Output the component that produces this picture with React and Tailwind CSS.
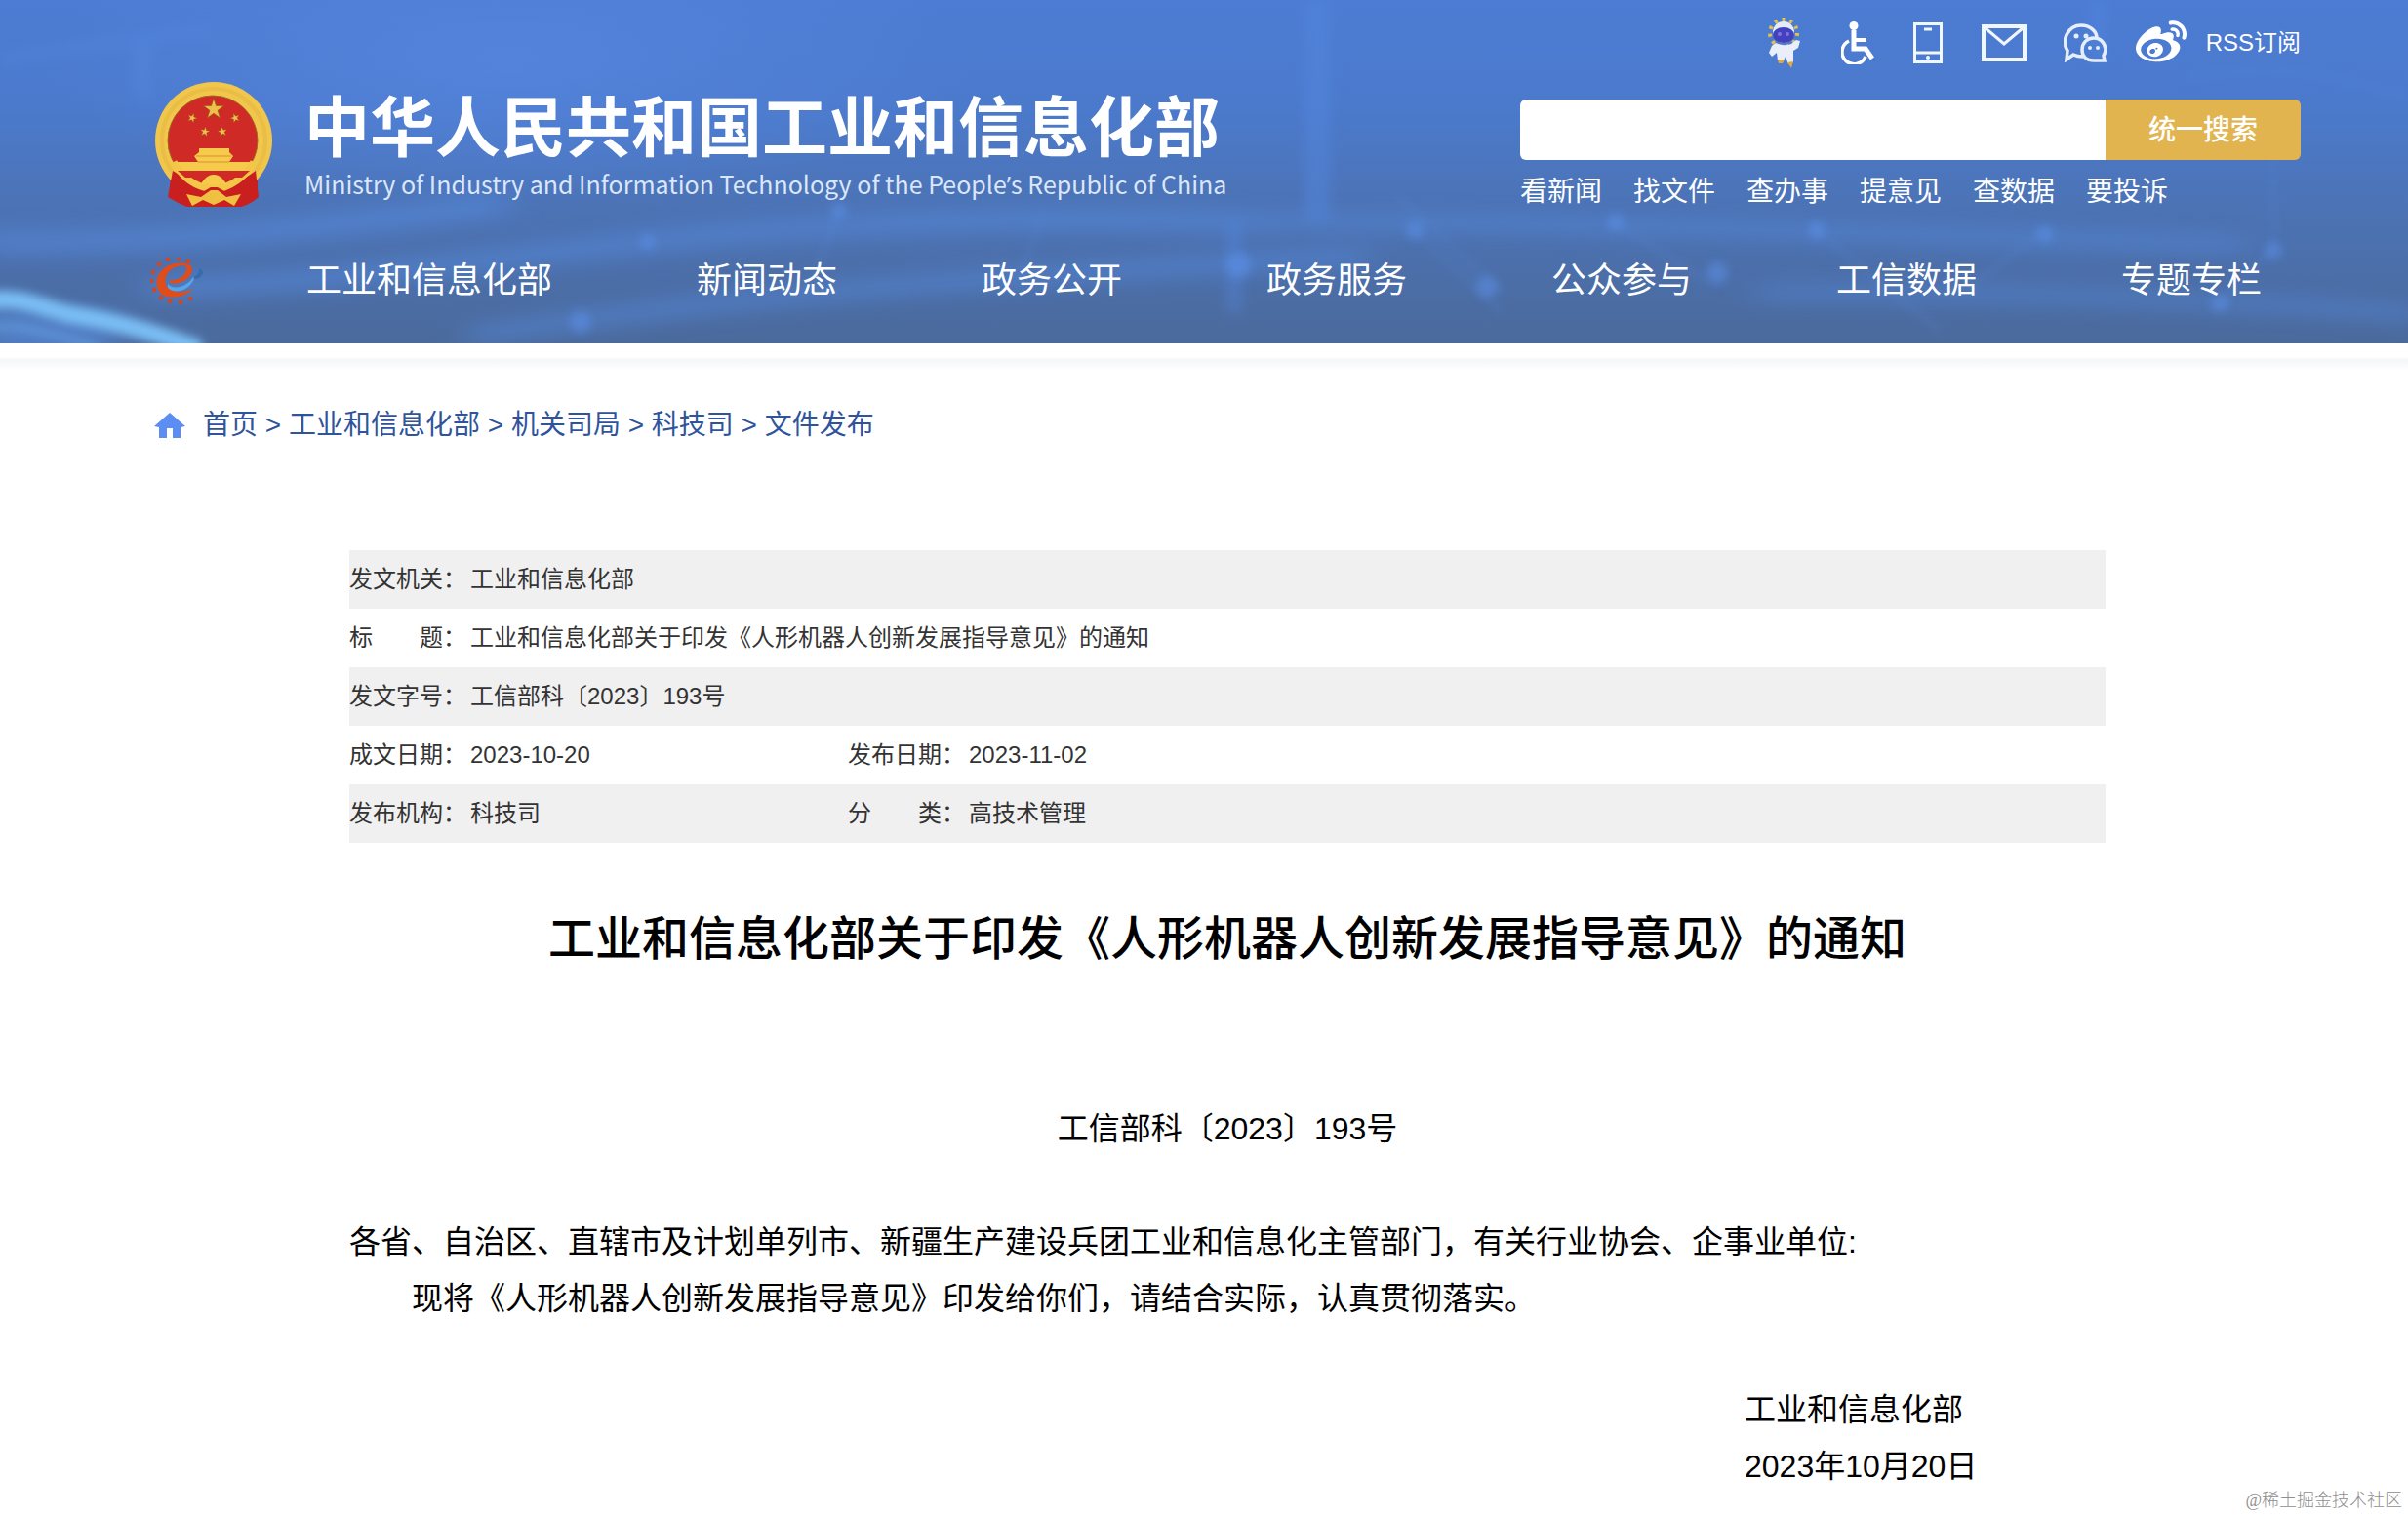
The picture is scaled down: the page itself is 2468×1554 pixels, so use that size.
import React from 'react';
import { FaWeibo } from 'react-icons/fa';

const navItems = ['工业和信息化部', '新闻动态', '政务公开', '政务服务', '公众参与', '工信数据', '专题专栏'];

const quickLinks = ['看新闻', '找文件', '查办事', '提意见', '查数据', '要投诉'];

const crumbs = ['首页', '工业和信息化部', '机关司局', '科技司', '文件发布'];

const docInfo = [
  [['发文机关：', '工业和信息化部']],
  [['标　　题：', '工业和信息化部关于印发《人形机器人创新发展指导意见》的通知']],
  [['发文字号：', '工信部科〔2023〕193号']],
  [['成文日期：', '2023-10-20'], ['发布日期：', '2023-11-02']],
  [['发布机构：', '科技司'], ['分　　类：', '高技术管理']],
];

const STAR = 'M0,-10 L2.3,-3.1 L9.5,-3.1 L3.7,1.2 L5.9,8.1 L0,3.9 L-5.9,8.1 L-3.7,1.2 L-9.5,-3.1 L-2.3,-3.1 Z';

// teeth of the gear logo, as points round its centre
const teeth = [[39, 4], [29, 1], [18, 2], [9, 7], [3, 15], [1, 24], [4, 33], [11, 41], [20, 45], [31, 46], [41, 42]];

function HeaderBackdrop() {
  return (
    <svg className="absolute inset-0 w-full h-full" viewBox="0 0 2468 352" preserveAspectRatio="none" aria-hidden="true">
      <defs>
        <linearGradient id="sky" x1="0" y1="0" x2="0" y2="1">
          <stop offset="0" stopColor="#4c7cd3" />
          <stop offset="0.3" stopColor="#4b7acd" />
          <stop offset="0.6" stopColor="#4c73b5" />
          <stop offset="1" stopColor="#4b6a9c" />
        </linearGradient>
        <radialGradient id="glow">
          <stop offset="0" stopColor="#5585de" stopOpacity="0.8" />
          <stop offset="1" stopColor="#5585de" stopOpacity="0" />
        </radialGradient>
        <filter id="soft" x="-200" y="-100" width="2868" height="552" filterUnits="userSpaceOnUse">
          <feGaussianBlur stdDeviation="7" />
        </filter>
        <filter id="softer" x="-200" y="-100" width="2868" height="552" filterUnits="userSpaceOnUse">
          <feGaussianBlur stdDeviation="18 10" />
        </filter>
        <filter id="fine" x="-200" y="-100" width="2868" height="552" filterUnits="userSpaceOnUse">
          <feGaussianBlur stdDeviation="5" />
        </filter>
      </defs>
      <rect width="2468" height="352" fill="url(#sky)" />
      <ellipse cx="520" cy="60" rx="480" ry="150" fill="url(#glow)" />
      <g filter="url(#softer)" fill="none" stroke="#5488da" opacity="0.65">
        <path d="M-20,248 C120,250 300,240 520,208" strokeWidth="24" />
        <path d="M150,296 C350,290 520,262 700,244 C900,225 1100,222 1290,228" strokeWidth="20" />
        <path d="M480,345 C700,310 900,290 1400,262" strokeWidth="16" />
        <path d="M1200,228 C1600,224 1900,240 2300,250" strokeWidth="14" />
        <path d="M1800,300 C2050,300 2250,305 2480,322" strokeWidth="12" />
        <path d="M-20,335 L120,350" strokeWidth="50" />
      </g>
      <g filter="url(#soft)" stroke="#5488e0" opacity="0.45" fill="none">
        <path d="M146,45 V100" strokeWidth="18" />
        <path d="M1350,0 V225" strokeWidth="26" />
        <path d="M2150,0 V60" strokeWidth="14" />
        <path d="M1265,230 V320" strokeWidth="14" />
        <path d="M0,60 L220,30" strokeWidth="10" />
      </g>
      <g filter="url(#fine)" fill="none" stroke="#5a8bdb" opacity="0.25" strokeWidth="5">
        <path d="M1450,236 L1540,320 M1860,236 L1990,340 M2090,240 L2010,300 M2330,160 V255 L2275,310 M1430,200 L1540,300 M1660,230 L1750,290 M860,212 L830,300" />
        <path d="M2240,80 C2340,60 2400,80 2468,100 M1070,215 L1040,300" />
      </g>
      <g filter="url(#fine)" fill="#5b90e8" opacity="0.55">
        <circle cx="1450" cy="236" r="9" />
        <circle cx="1656" cy="228" r="9" />
        <circle cx="1862" cy="236" r="9" />
        <circle cx="2096" cy="240" r="9" />
        <circle cx="2330" cy="257" r="9" />
        <circle cx="2275" cy="311" r="9" />
        <circle cx="1524" cy="294" r="11" />
        <circle cx="1760" cy="280" r="11" />
        <circle cx="1270" cy="272" r="13" />
        <circle cx="860" cy="216" r="8" />
        <circle cx="664" cy="248" r="8" />
        <circle cx="595" cy="330" r="11" />
      </g>
      <g filter="url(#fine)" fill="none" stroke="#79bdf4">
        <path d="M-10,308 C20,304 40,314 70,322 C120,330 150,338 205,358" strokeWidth="18" />
        <path d="M-10,335 C30,332 60,345 100,356" strokeWidth="6" opacity="0.4" />
      </g>
    </svg>
  );
}

function Emblem() {
  return (
    <svg className="w-[122px] h-32 shrink-0" viewBox="0 0 122 128" role="img" aria-label="国徽">
      <path d="M18,86 L106,86 L106,118 Q98,126 88,128 L34,128 Q24,124 15,118 Z" fill="#c41f22" />
      <circle cx="61" cy="60" r="60" fill="#f1c64c" />
      <circle cx="61" cy="60" r="53" fill="none" stroke="#e2b03d" strokeWidth="4" opacity="0.4" />
      <circle cx="60" cy="60" r="46" fill="#d02a26" stroke="#9c6a22" strokeWidth="1" />
      <g fill="#eec04a" stroke="#8a5a1c" strokeWidth="0.6">
        <path d={STAR} transform="translate(61 28) scale(1.1)" />
        <path d={STAR} transform="translate(39 37) scale(0.5) rotate(20)" />
        <path d={STAR} transform="translate(83 37) scale(0.5) rotate(-20)" />
        <path d={STAR} transform="translate(52 51) scale(0.5) rotate(10)" />
        <path d={STAR} transform="translate(70 51) scale(0.5) rotate(-10)" />
      </g>
      <path d="M46,68 H77 V72 L81,76 L77,82 H98 V91 H24 V82 H45 L41,76 L46,72 Z" fill="#f6cb4c" />
      <path d="M43,76 H79 M45,82 H77" stroke="#d9902f" strokeWidth="1" />
      <path d="M19,91 Q34,100 48,108 L75,108 Q92,100 104,91 L107,118 Q98,126 88,128 L34,128 Q24,124 14,118 Z" fill="#c9201f" />
      <path d="M20,82 Q32,103 51,108 L61,102 L72,108 Q92,100 102,82" fill="none" stroke="#f3c648" strokeWidth="7" />
      <path d="M24,91 H98 L90,98 H76 Q68,93 61,94 Q54,93 46,98 H32 Z" fill="#d02a26" />
      <path d="M47,106 Q54,94 61,95 Q68,94 75,106 L66,104 L61,107 L55,104 Z" fill="#f6cb4c" />
      <path d="M33,115 L48,118 L58,111 L65,111 L74,118 L89,115 L82,127 L72,121 L61,126 L50,121 L39,127 Z" fill="#f0c043" />
    </svg>
  );
}

function GearLogo() {
  return (
    <svg className="w-14 h-12" viewBox="0 0 56 48" aria-hidden="true">
      <path d="M18,27 C24,34 38,30 44,20 L45,22 C40,33 27,38 18,32 Z" fill="#57a4e6" />
      <path d="M45,20 Q51,17 50,11 Q56,14 53,18 Q50,22 45,22 Z" fill="#346cb0" />
      {teeth.map(([x, y]) => (
        <circle key={`${x}-${y}`} cx={x} cy={y} r="2.3" fill="#d8441c" />
      ))}
      <path
        d="M20,26 C30,29 43,21 43,12 C43,4 24,3 14,11 C4,19 4,33 14,39 C23,43 37,40 44,32 C36,36 24,37 18,31 C12,24 17,12 28,9 C35,7 38,9 37,13 C35,20 27,24 20,23 Z"
        fill="#e04c1a"
      />
    </svg>
  );
}

function Mascot() {
  return (
    <svg className="w-9 h-[52px]" viewBox="0 0 36 52" aria-hidden="true">
      <circle cx="17" cy="16" r="14" fill="none" stroke="#e2c14c" strokeWidth="4" strokeDasharray="3 5" />
      <ellipse cx="17" cy="15" rx="11" ry="11" fill="#e6ebf8" />
      <ellipse cx="17" cy="18" rx="11" ry="8" fill="#4341bd" />
      <circle cx="13" cy="17" r="2" fill="#7d74e0" />
      <circle cx="21" cy="17" r="2" fill="#7d74e0" />
      <path d="M9,26 Q17,30 25,27 L30,23 L34,24 L32,31 L27,34 L27,46 L22,48 L19,40 L17,44 L11,44 L10,36 L5,40 L2,36 L5,29 Z" fill="#e9eefa" />
      <path d="M11,43 H18 L16,47 H12 Z M21,46 L27,45 L25,52 Z" fill="#dfa940" />
    </svg>
  );
}

function ToolIcons() {
  return (
    <>
      <a href="#robot" aria-label="智能问答"><Mascot /></a>
      <a href="#barrier-free" aria-label="无障碍" className="ml-10">
        <svg className="w-[34px] h-11" viewBox="0 0 34 44" fill="none" stroke="#fff">
          <circle cx="13" cy="4.5" r="4.5" fill="#fff" stroke="none" />
          <path d="M13,9 V28 H25 L32,38" strokeWidth="5" />
          <path d="M13,19 H26" strokeWidth="4" />
          <path d="M8,20 A12.500,12.500 0 1 0 25,36" strokeWidth="3.5" />
        </svg>
      </a>
      <a href="#mobile" aria-label="手机版" className="ml-10">
        <svg className="w-[30px] h-[42px]" viewBox="0 0 30 42" fill="none" stroke="#f2f6fd" strokeWidth="3">
          <path d="M1.5,1.5 H28.5 V40.5 H1.5 Z M1.5,31 H28.5" />
          <path d="M11,7 H19" strokeWidth="3" />
          <circle cx="15" cy="36" r="2" fill="#f2f6fd" stroke="none" />
        </svg>
      </a>
      <a href="#mail" aria-label="邮箱" className="ml-10">
        <svg className="w-[46px] h-[38px]" viewBox="0 0 46 38" fill="none" stroke="#f2f6fd" strokeWidth="4">
          <path d="M2,2 H44 V36 H2 Z" />
          <path d="M4,4 L23,20 L42,4" strokeWidth="3" />
        </svg>
      </a>
      <a href="#wechat" aria-label="微信" className="ml-[38px]">
        <svg className="w-11 h-10" viewBox="0 0 44 40" fill="none" stroke="#e6eefb" strokeWidth="3.5">
          <path d="M20,34 Q14,34 10,32 L3,37 L4,28 C-3,17 5,2 18,2 C27,2 34,8 34,15" />
          <path d="M42,38 L41,33 Q43,30 43,26 C42,19 37,15 31,15 C24,15 19,20 19,27 C19,34 24,38 31,38 Z" />
          <g fill="#e6eefb" stroke="none">
            <circle cx="13" cy="13" r="2.5" />
            <circle cx="23" cy="13" r="2.5" />
            <circle cx="27" cy="25" r="2" />
            <circle cx="35" cy="25" r="2" />
          </g>
        </svg>
      </a>
      <a href="#weibo" aria-label="微博" className="ml-[30px]"><FaWeibo size={52} /></a>
    </>
  );
}

function Header() {
  return (
    <header className="relative bg-[#4b74ba] text-white pl-12">
      <HeaderBackdrop />
      <div className="relative max-w-[2200px] mx-auto">
        <div className="flex justify-between">
          <a href="#home" className="flex items-start pt-[84px]">
            <Emblem />
            <span className="block ml-8 whitespace-nowrap">
              <span className="block pt-1 text-[67px] leading-[88px] font-bold">中华人民共和国工业和信息化部</span>
              <span className="block text-[25px] leading-6 text-[#dbe6f8] font-['Noto_Sans_CJK_SC',sans-serif]">
                Ministry of Industry and Information Technology of the People
                <span className="font-['Open_Sans',sans-serif]">’</span>
                s Republic of China
              </span>
            </span>
          </a>

          <div className="w-[800px] pt-[18px]">
            <div className="flex items-center justify-end h-[52px]">
              <ToolIcons />
              <a href="#rss" className="ml-5 text-2xl whitespace-nowrap">RSS订阅</a>
            </div>
            <form className="flex mt-8 h-[62px] rounded-md overflow-hidden" onSubmit={(e) => e.preventDefault()}>
              <input type="text" aria-label="搜索" className="flex-1 min-w-0 bg-white px-4 text-[28px] text-gray-800 outline-none" />
              <button type="submit" className="w-[200px] pt-0.5 bg-[#e2b44f] text-[28px] font-medium">统一搜索</button>
            </form>
            <div className="flex gap-8 mt-3 text-[28px] leading-[42px]">
              {quickLinks.map((link) => (
                <a key={link} href="#search">{link}</a>
              ))}
            </div>
          </div>
        </div>

        <nav className="flex items-center h-[134px] pt-1.5 whitespace-nowrap">
          <a href="#home" aria-label="首页" className="-ml-1 mr-[104px]"><GearLogo /></a>
          <div className="flex gap-[148px] text-4xl">
            {navItems.map((item) => (
              <a key={item} href="#nav">{item}</a>
            ))}
          </div>
        </nav>
      </div>
    </header>
  );
}

function Breadcrumb() {
  return (
    <div className="flex items-center pt-9 text-[28px] leading-10 text-[#2f549b]">
      <svg className="w-8 h-[26px] mr-[18px]" viewBox="0 0 32 26" fill="#5b8df2" aria-hidden="true">
        <path d="M16,0 L32,14 L27,15 V26 H19 V16 H13 V26 H5 V15 L0,14 Z" />
      </svg>
      <p>
        {crumbs.map((crumb, index) => (
          <React.Fragment key={crumb}>
            {index > 0 && ' > '}
            <a href="#crumb">{crumb}</a>
          </React.Fragment>
        ))}
      </p>
    </div>
  );
}

function DocTable() {
  return (
    <table className="w-full mt-[108px] table-fixed text-2xl text-[#333]">
      <colgroup>
        <col className="w-[124px]" />
        <col className="w-[387px]" />
        <col className="w-[124px]" />
        <col />
      </colgroup>
      <tbody>
        {docInfo.map((row) => (
          <tr key={row[0][0]} className="h-[60px] odd:bg-[#f0f0f0]">
            {row.map(([label, value]) => (
              <React.Fragment key={label}>
                <th scope="row" className="text-left font-normal whitespace-nowrap">{label}</th>
                <td colSpan={row.length === 1 ? 3 : 1}>{value}</td>
              </React.Fragment>
            ))}
          </tr>
        ))}
      </tbody>
    </table>
  );
}

function App() {
  return (
    <div lang="zh-CN" className="relative bg-white text-black font-['Liberation_Sans','Noto_Sans_CJK_SC',sans-serif]">
      <Header />
      <div className="h-7 bg-linear-to-b from-white from-50% via-[#f4f6f7] via-60% to-white" />

      <main className="pl-12">
        <div className="max-w-[2200px] mx-auto">
          <Breadcrumb />
          <article className="max-w-[1800px] mx-auto pb-6">
            <DocTable />
            <h1 className="mt-16 text-5xl leading-[70px] font-medium text-center">
              工业和信息化部关于印发《人形机器人创新发展指导意见》的通知
            </h1>
            <div className="mt-[130px] text-[32px] leading-[58px]">
              <p className="text-center">工信部科〔2023〕193号</p>
              <p className="mt-[58px]">
                各省、自治区、直辖市及计划单列市、新疆生产建设兵团工业和信息化主管部门，有关行业协会、企事业单位:
              </p>
              <p className="indent-16">现将《人形机器人创新发展指导意见》印发给你们，请结合实际，认真贯彻落实。</p>
              <div className="w-[370px] ml-auto mt-14">
                <p>工业和信息化部</p>
                <p>2023年10月20日</p>
              </div>
            </div>
          </article>
        </div>
      </main>

      <span className="absolute right-1.5 bottom-1 text-lg font-light text-[#8f8f8f] font-['Liberation_Serif','Noto_Sans_CJK_SC',serif]">
        @稀土掘金技术社区
      </span>
    </div>
  );
}

export default App;
